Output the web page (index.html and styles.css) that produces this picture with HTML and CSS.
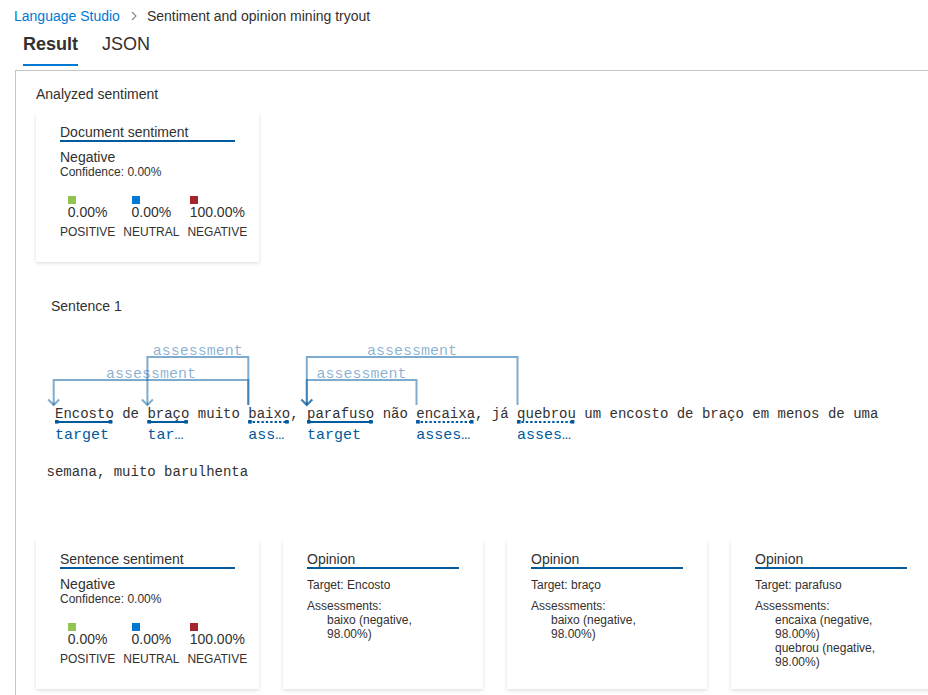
FILE: index.html
```html
<!DOCTYPE html>
<html>
<head>
<meta charset="utf-8">
<link rel="stylesheet" href="styles.css">
</head>
<body>
<nav class="breadcrumb">
  <a class="crumb-link" href="#">Language Studio</a>
  <svg class="chev" width="6" height="10" viewBox="0 0 6 10"><path d="M1 1 L5 5 L1 9" fill="none" stroke="#8a8886" stroke-width="1.1"/></svg>
  <span class="crumb-current">Sentiment and opinion mining tryout</span>
</nav>
<div class="tabs">
  <div class="tab active">Result</div>
  <div class="tab">JSON</div>
</div>
<section class="panel">
  <div class="section-title">Analyzed sentiment</div>
  <div class="card sent-card">
    <div class="card-title">Document sentiment</div>
    <div class="label-main">Negative</div>
    <div class="label-sub">Confidence: 0.00%</div>
    <div class="scores">
      <div class="score"><div class="score-val"><span class="sq pos"></span><span class="pct">0.00%</span></div><div class="score-name">POSITIVE</div></div>
      <div class="score"><div class="score-val"><span class="sq neu"></span><span class="pct">0.00%</span></div><div class="score-name">NEUTRAL</div></div>
      <div class="score"><div class="score-val"><span class="sq neg"></span><span class="pct">100.00%</span></div><div class="score-name">NEGATIVE</div></div>
    </div>
  </div>

  <div class="sentence-title">Sentence 1</div>
  <svg class="diagram" width="892" height="190" viewBox="36 330 892 190">
    <g class="arcs" fill="none" stroke="#005a9e" stroke-opacity="0.5" stroke-width="2">
      <path d="M248.3 405 V357 H147.4 V405"/>
      <path d="M141.9 399.5 L147.4 405 L152.9 399.5"/>
      <path d="M248.3 405 V380 H53.7 V405"/>
      <path d="M48.2 399.5 L53.7 405 L59.2 399.5"/>
      <path d="M517.5 405 V357 H306.8 V405"/>
      <path d="M301.3 399.5 L306.8 405 L312.3 399.5"/>
      <path d="M416.5 405 V380 H306.8 V405"/>
      <path d="M301.3 399.5 L306.8 405 L312.3 399.5"/>
    </g>
    <g class="arc-labels" text-anchor="middle">
      <text x="197.8" y="354.5">assessment</text>
      <text x="151" y="378">assessment</text>
      <text x="412.1" y="354.5">assessment</text>
      <text x="361.6" y="378">assessment</text>
    </g>
    <text class="sent-text" x="55" y="417.5">Encosto de braço muito baixo, parafuso não encaixa, já quebrou um encosto de braço em menos de uma</text>
    <text class="sent-text" x="46.5" y="476">semana, muito barulhenta</text>
    <g class="underlines" stroke="#005a9e" stroke-width="2">
      <line x1="55" y1="422" x2="112.3" y2="422"/>
      <line x1="147.4" y1="422" x2="187.9" y2="422"/>
      <line x1="307" y1="422" x2="372.7" y2="422"/>
      <line class="dotted" x1="248.2" y1="422" x2="288.7" y2="422"/>
      <line class="dotted" x1="416.2" y1="422" x2="473.5" y2="422"/>
      <line class="dotted" x1="517" y1="422" x2="574.3" y2="422"/>
    </g>
    <g class="ends" fill="#005a9e">
      <rect x="55" y="420" width="3.6" height="3.6"/><rect x="108.7" y="420" width="3.6" height="3.6"/>
      <rect x="147.4" y="420" width="3.6" height="3.6"/><rect x="184.3" y="420" width="3.6" height="3.6"/>
      <rect x="248.2" y="420" width="3.6" height="3.6"/><rect x="285.1" y="420" width="3.6" height="3.6"/>
      <rect x="307" y="420" width="3.6" height="3.6"/><rect x="369.1" y="420" width="3.6" height="3.6"/>
      <rect x="416.2" y="420" width="3.6" height="3.6"/><rect x="469.9" y="420" width="3.6" height="3.6"/>
      <rect x="517" y="420" width="3.6" height="3.6"/><rect x="570.7" y="420" width="3.6" height="3.6"/>
    </g>
    <g class="tok-labels">
      <text x="55" y="439">target</text>
      <text x="147.4" y="439">tar…</text>
      <text x="248.2" y="439">ass…</text>
      <text x="307" y="439">target</text>
      <text x="416.2" y="439">asses…</text>
      <text x="517" y="439">asses…</text>
    </g>
  </svg>

  <div class="card-row">
    <div class="card sent-card">
      <div class="card-title">Sentence sentiment</div>
      <div class="label-main">Negative</div>
      <div class="label-sub">Confidence: 0.00%</div>
      <div class="scores">
        <div class="score"><div class="score-val"><span class="sq pos"></span><span class="pct">0.00%</span></div><div class="score-name">POSITIVE</div></div>
        <div class="score"><div class="score-val"><span class="sq neu"></span><span class="pct">0.00%</span></div><div class="score-name">NEUTRAL</div></div>
        <div class="score"><div class="score-val"><span class="sq neg"></span><span class="pct">100.00%</span></div><div class="score-name">NEGATIVE</div></div>
      </div>
    </div>
    <div class="card op-card">
      <div class="card-title">Opinion</div>
      <div class="op-target">Target: Encosto</div>
      <div class="op-head">Assessments:</div>
      <div class="op-list"><div>baixo (negative, 98.00%)</div></div>
    </div>
    <div class="card op-card">
      <div class="card-title">Opinion</div>
      <div class="op-target">Target: braço</div>
      <div class="op-head">Assessments:</div>
      <div class="op-list"><div>baixo (negative, 98.00%)</div></div>
    </div>
    <div class="card op-card">
      <div class="card-title">Opinion</div>
      <div class="op-target">Target: parafuso</div>
      <div class="op-head">Assessments:</div>
      <div class="op-list"><div>encaixa (negative, 98.00%)</div><div>quebrou (negative, 98.00%)</div></div>
    </div>
  </div>
</section>
</body>
</html>
```
FILE: styles.css
```css
html, body {
  margin: 0;
  padding: 0;
  overflow: hidden;
  background: #ffffff;
}
body {
  font-family: "Liberation Sans", Arial, sans-serif;
  color: #323130;
  width: 928px;
  height: 695px;
}
.breadcrumb {
  display: flex;
  align-items: center;
  height: 32px;
  padding-left: 14px;
  font-size: 14px;
  line-height: 20px;
}
.crumb-link {
  color: #0078d4;
  text-decoration: none;
}
.chev {
  margin: 0 10px 0 11px;
}
.crumb-current {
  color: #323130;
}
.tabs {
  display: flex;
  gap: 24px;
  padding-left: 23px;
  margin-bottom: 4px;
}
.tab {
  font-size: 18px;
  line-height: 24px;
  padding-bottom: 8px;
  border-bottom: 2px solid transparent;
}
.tab.active {
  font-weight: 700;
  border-bottom-color: #0078d4;
}
.panel {
  margin-left: 15px;
  border-top: 1px solid #c8c6c4;
  border-left: 1px solid #c8c6c4;
  padding: 13px 0 0 20px;
  height: 625px;
  box-sizing: border-box;
  overflow: hidden;
}
.section-title {
  font-size: 14px;
  line-height: 20px;
  margin-bottom: 8px;
}
.card {
  background: #fff;
  box-shadow: 0 1.6px 3.6px 0 rgba(0,0,0,0.132), 0 0.3px 0.9px 0 rgba(0,0,0,0.108);
  height: 150px;
  box-sizing: border-box;
  padding: 12px 24px 0 24px;
  flex-shrink: 0;
}
.sent-card {
  width: 223px;
}
.op-card {
  width: 200px;
}
.card-title {
  font-size: 14px;
  line-height: 16px;
  border-bottom: 2px solid #005a9e;
}
.label-main {
  font-size: 14px;
  line-height: 16px;
  margin-top: 7px;
}
.label-sub {
  font-size: 12px;
  line-height: 14px;
}
.scores {
  display: flex;
  gap: 8px;
  margin-top: 17px;
}
.score {
  display: flex;
  flex-direction: column;
  align-items: center;
}
.score-val {
  display: flex;
  flex-direction: column;
  align-items: flex-start;
}
.sq {
  width: 8px;
  height: 8px;
  display: block;
}
.sq.pos { background: #92c353; }
.sq.neu { background: #0078d4; }
.sq.neg { background: #a4262c; }
.pct {
  font-size: 14px;
  line-height: 16px;
}
.score-name {
  font-size: 12px;
  line-height: 14px;
  margin-top: 5px;
}
.sentence-title {
  font-size: 14px;
  line-height: 20px;
  margin-top: 34px;
  padding-left: 15px;
}
.diagram {
  display: block;
  margin-top: 14px;
  overflow: visible;
}
.arc-labels text {
  font-family: "Liberation Mono", monospace;
  font-size: 15px;
  fill: #005a9e;
  fill-opacity: 0.47;
}
.sent-text {
  font-family: "Liberation Mono", monospace;
  font-size: 14px;
  fill: #323130;
}
.dotted {
  stroke-dasharray: 2.4 2;
}
.tok-labels text {
  font-family: "Liberation Mono", monospace;
  font-size: 15px;
  fill: #005a9e;
}
.card-row {
  display: flex;
  gap: 24px;
  margin-top: 19px;
}
.op-target {
  font-size: 12px;
  line-height: 14px;
  margin-top: 9px;
}
.op-head {
  font-size: 12px;
  line-height: 14px;
  margin-top: 7px;
}
.op-list {
  font-size: 12px;
  line-height: 14px;
  padding: 0 20px;
}
```
